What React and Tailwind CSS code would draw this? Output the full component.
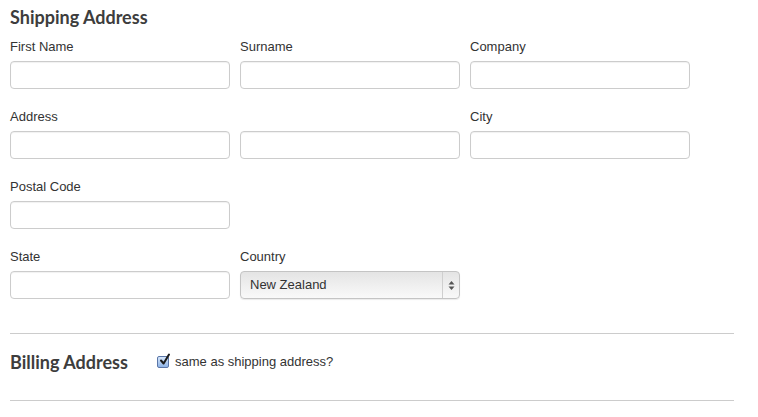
import React from "react";

const fields = [
  [
    { label: "First Name" },
    { label: "Surname" },
    { label: "Company" },
  ],
  [{ label: "Address" }, { label: "" }, { label: "City" }],
  [{ label: "Postal Code" }],
  [{ label: "State" }, { label: "Country", select: true }],
];

function TextInput() {
  return (
    <input
      type="text"
      className="block h-[28px] w-[220px] rounded-[4px] border border-[#cccccc] bg-white shadow-[inset_0_1px_1px_rgba(0,0,0,0.06)] outline-none"
    />
  );
}

function CountrySelect() {
  return (
    <div className="flex h-[28px] w-[220px] items-center rounded-[4px] border border-[#c4c4c4] bg-gradient-to-b from-[#e4e4e4] via-[#efefef] to-[#f9f9f9] shadow-[0_1px_1px_rgba(0,0,0,0.08)]">
      <span className="flex-1 pl-[9px] text-[13px] text-[#333]">New Zealand</span>
      <span className="flex h-full w-[17px] items-center justify-center border-l border-[#cfcfcf]">
        <svg width="7" height="11" viewBox="0 0 7 11">
          <path d="M3.5 1 L6.5 4.5 L0.5 4.5 Z" fill="#555" />
          <path d="M3.5 10 L6.5 6.5 L0.5 6.5 Z" fill="#555" />
        </svg>
      </span>
    </div>
  );
}

function CheckBox() {
  return (
    <span className="relative inline-flex h-[12px] w-[12px] items-center justify-center rounded-[2px] border border-[#5a76a8] bg-gradient-to-b from-[#d6e6fa] to-[#8fb4e6]">
      <svg
        width="12"
        height="13"
        viewBox="0 0 12 13"
        className="absolute left-[1px] top-[-4px]"
      >
        <path
          d="M2 7.5 L4.6 10.5 L10 1.5"
          fill="none"
          stroke="#1a1a1a"
          strokeWidth="2"
          strokeLinecap="round"
          strokeLinejoin="round"
        />
      </svg>
    </span>
  );
}

export default function App() {
  return (
    <div
      className="min-h-[417px] w-[758px] bg-white pl-[10px] text-[#333]"
      style={{ fontFamily: "'Liberation Sans', Arial, sans-serif" }}
    >
      <h2
        className="pt-[5px] text-[18px] font-bold leading-[24px] text-[#3d3d3d]"
        style={{ fontFamily: "Lato, 'Open Sans', sans-serif" }}
      >
        Shipping Address
      </h2>
      <div className="mt-[9px]">
        {fields.map((row, i) => (
          <div key={i} className="flex gap-x-[10px]">
            {row.map((f, j) => (
              <div key={j} className="mb-[19px] w-[220px]">
                <label className="mb-[5px] block h-[18px] text-[13px] leading-[18px] text-[#333]">
                  {f.label}
                </label>
                {f.select ? <CountrySelect /> : <TextInput />}
              </div>
            ))}
          </div>
        ))}
      </div>
      <div className="mt-[15px] w-[724px] border-t border-[#cccccc]" />
      <div className="flex h-[56px] w-[724px] items-center">
        <h2
          className="w-[147px] text-[18px] font-bold leading-[24px] text-[#3d3d3d]"
          style={{ fontFamily: "Lato, 'Open Sans', sans-serif" }}
        >
          Billing Address
        </h2>
        <label className="flex items-center gap-[6px] text-[13px] text-[#333]">
          <CheckBox />
          same as shipping address?
        </label>
      </div>
      <div className="mt-[10px] w-[724px] border-t border-[#cccccc]" />
    </div>
  );
}
